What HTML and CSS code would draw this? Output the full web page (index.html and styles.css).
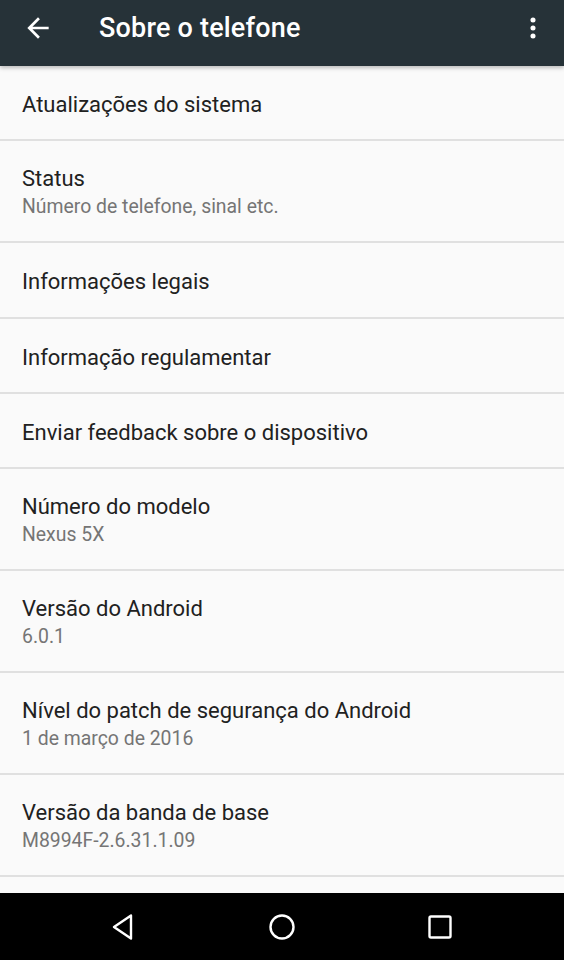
FILE: index.html
```html
<!DOCTYPE html>
<html lang="pt-BR">
<head>
    <meta charset="UTF-8">
    <meta name="viewport" content="width=device-width, initial-scale=1.0">
    <title>Sobre o telefone</title>
    <link rel="stylesheet" href="styles.css">
</head>
<body>
    <div class="screen">
        <header class="toolbar">
            <svg class="back" viewBox="0 0 24 24" width="32" height="32">
                <path d="M20 11H7.83l5.59-5.59L12 4l-8 8 8 8 1.41-1.41L7.83 13H20v-2z" fill="#fff"/>
            </svg>
            <h1>Sobre o telefone</h1>
            <svg class="more" viewBox="0 0 24 24" width="32" height="32">
                <circle cx="12" cy="6" r="1.9" fill="#fff"/>
                <circle cx="12" cy="12" r="1.9" fill="#fff"/>
                <circle cx="12" cy="18" r="1.9" fill="#fff"/>
            </svg>
        </header>

        <ul class="list">
            <li class="item"><span class="title">Atualizações do sistema</span></li>
            <li class="item two"><span class="title">Status</span><span class="summary">Número de telefone, sinal etc.</span></li>
            <li class="item tall"><span class="title">Informações legais</span></li>
            <li class="item"><span class="title">Informação regulamentar</span></li>
            <li class="item"><span class="title">Enviar feedback sobre o dispositivo</span></li>
            <li class="item two"><span class="title">Número do modelo</span><span class="summary">Nexus 5X</span></li>
            <li class="item two"><span class="title">Versão do Android</span><span class="summary">6.0.1</span></li>
            <li class="item two"><span class="title">Nível do patch de segurança do Android</span><span class="summary">1 de março de 2016</span></li>
            <li class="item two"><span class="title">Versão da banda de base</span><span class="summary">M8994F-2.6.31.1.09</span></li>
            <li class="item two"></li>
        </ul>

        <nav class="navbar">
            <svg class="nav-back" viewBox="0 0 24 28" width="24" height="28">
                <path d="M20 2.5 L3 14 L20 25.5 Z" fill="none" stroke="#fff" stroke-width="2.4" stroke-linejoin="round"/>
            </svg>
            <svg class="nav-home" viewBox="0 0 28 28" width="28" height="28">
                <circle cx="14" cy="14" r="11.5" fill="none" stroke="#fff" stroke-width="2.4"/>
            </svg>
            <svg class="nav-recent" viewBox="0 0 28 28" width="28" height="28">
                <rect x="3.5" y="3.5" width="21" height="21" rx="1.5" fill="none" stroke="#fff" stroke-width="2.4"/>
            </svg>
        </nav>
    </div>
</body>
</html>
```

FILE: styles.css
```css
body {
    margin: 0;
    font-family: Roboto, "Noto Sans", sans-serif;
    background-color: #fafafa;
}

.screen {
    width: 564px;
    height: 960px;
    display: flex;
    flex-direction: column;
    overflow: hidden;
}

.toolbar {
    height: 66px;
    box-sizing: border-box;
    flex-shrink: 0;
    background-color: #263238;
    display: flex;
    align-items: center;
    padding: 0 15px 10px 22px;
    box-shadow: 0 2px 4px rgba(0,0,0,0.25);
    position: relative;
    z-index: 1;
}
.toolbar h1 {
    margin: 0 0 0 45px;
    flex: 1;
    color: #fff;
    font-size: 27px;
    font-weight: 500;
    letter-spacing: 0.2px;
}
.back {
    display: block;
}
.more {
    display: block;
}

.list {
    flex: 1;
    margin: 0;
    padding: 0;
    list-style: none;
    overflow: hidden;
}
.item {
    height: 69px;
    padding: 4px 0 0 22px;
    border-bottom: 2px solid #e0e0e0;
    display: flex;
    flex-direction: column;
    justify-content: center;
}
.item.tall {
    height: 70px;
}
.item.two {
    height: 96px;
}
.title {
    font-size: 22px;
    line-height: 28px;
    color: #212121;
}
.summary {
    font-size: 19.4px;
    line-height: 28px;
    color: #757575;
}

.navbar {
    height: 67px;
    flex-shrink: 0;
    background-color: #000;
    display: flex;
    align-items: center;
    padding-left: 111px;
}
.nav-home {
    margin-left: 133px;
}
.nav-recent {
    margin-left: 130px;
}
```
